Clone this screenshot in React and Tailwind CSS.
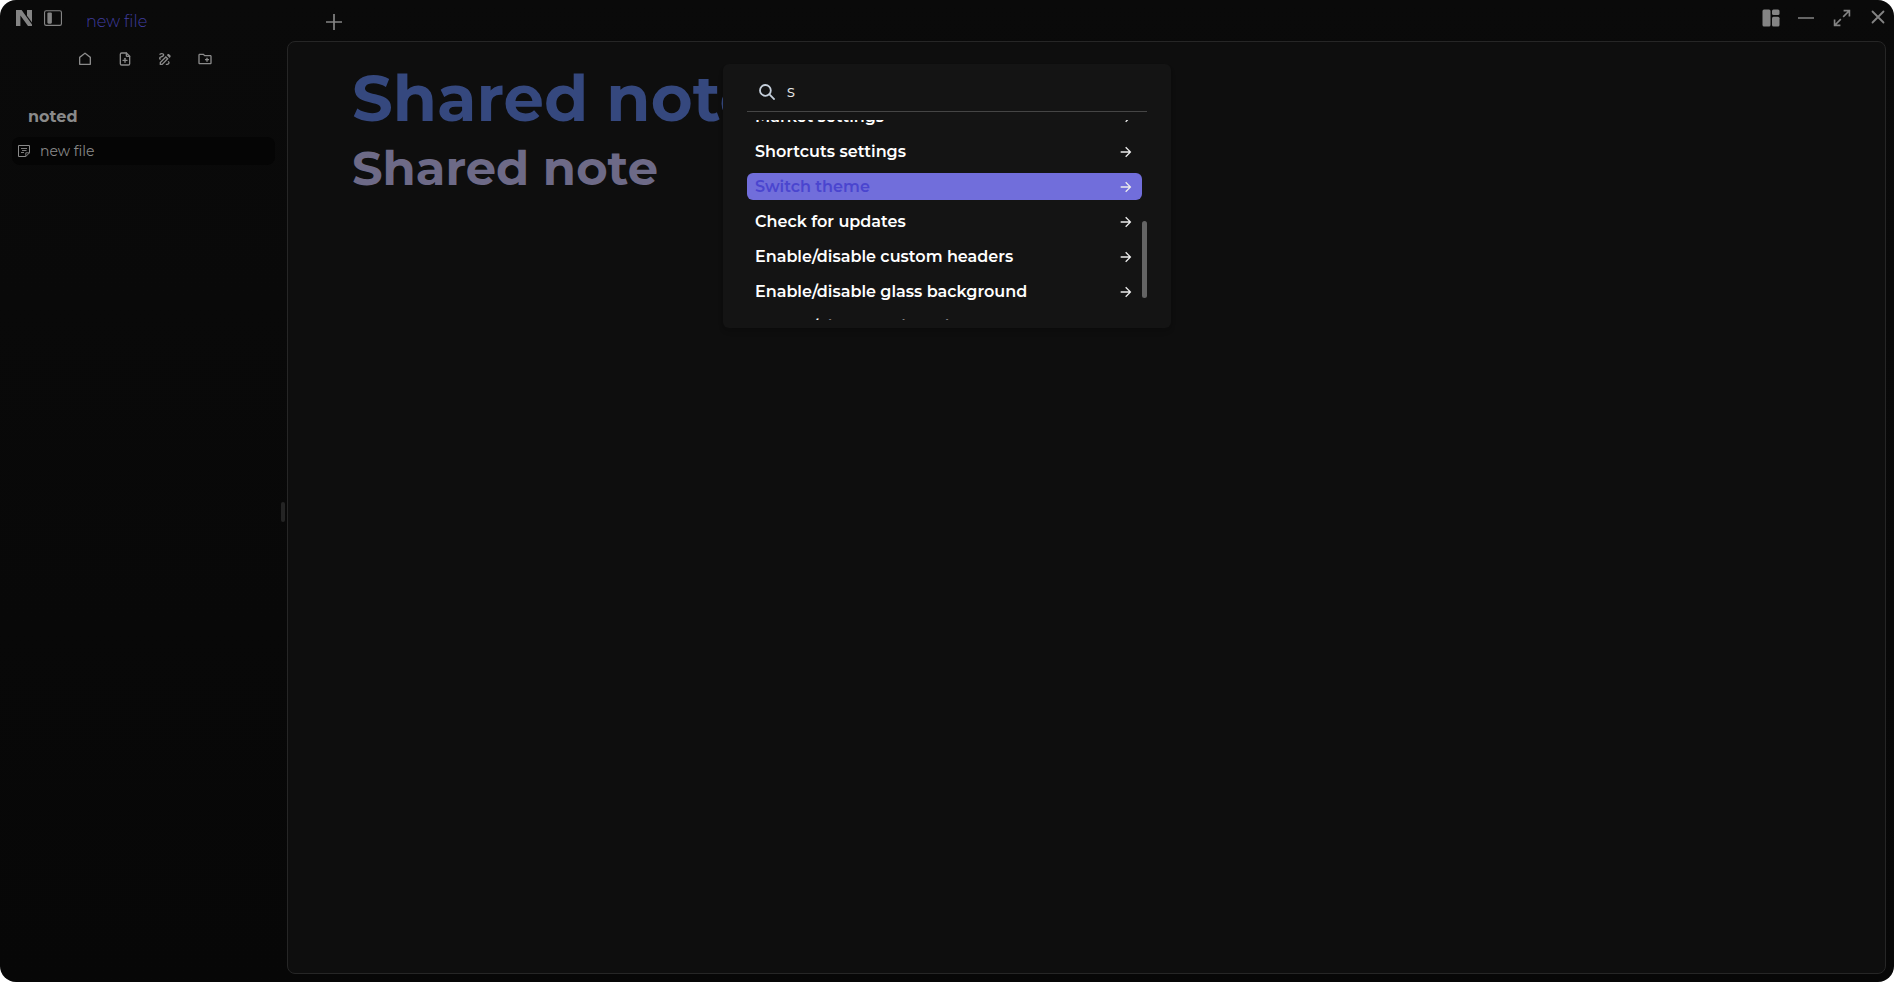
import { useState } from "react";
import { BsLayoutSidebarInset } from "react-icons/bs";
import { CgArrowsExpandRight } from "react-icons/cg";
import { MdOutlineCreateNewFolder, MdOutlineDraw } from "react-icons/md";
import { RiArrowRightLine, RiHomeLine } from "react-icons/ri";
import { TbFilePlus } from "react-icons/tb";

function Logo() {
  return (
    <svg viewBox="0 0 16 16" className="size-4" fill="currentColor" aria-hidden="true">
      <path d="M0 0h5.6L16 14.4V16h-4L4.4 5.4V16H0z" />
      <path d="M11 0h5v12.6l-5-6.9z" />
    </svg>
  );
}

function PanelsIcon() {
  return (
    <svg viewBox="0 0 18 18" className="size-[18px]" fill="currentColor" aria-hidden="true">
      <rect x="0.5" y="0.5" width="8" height="17" rx="1.5" />
      <rect x="10" y="0.5" width="7.5" height="5.5" rx="1.5" />
      <rect x="10" y="7.7" width="7.5" height="9.8" rx="1.5" />
    </svg>
  );
}

function PlusIcon() {
  return (
    <svg viewBox="0 0 16 16" className="size-4" stroke="currentColor" strokeWidth="1.7" aria-hidden="true">
      <path d="M8 0v16M0 8h16" />
    </svg>
  );
}

function MinusIcon() {
  return (
    <svg viewBox="0 0 16 16" className="size-4" stroke="currentColor" strokeWidth="1.7" aria-hidden="true">
      <path d="M0 8h16" />
    </svg>
  );
}

function CloseIcon() {
  return (
    <svg viewBox="0 0 16 16" className="size-4" stroke="currentColor" strokeWidth="1.8" strokeLinecap="round" aria-hidden="true">
      <path d="M2.5 1.5l11 11M13.5 1.5l-11 11" />
    </svg>
  );
}

function SearchIcon() {
  return (
    <svg viewBox="0 0 16 16" className="size-4 text-[#c6d0dc]" fill="none" stroke="currentColor" strokeWidth="1.8" aria-hidden="true">
      <circle cx="6.4" cy="6.4" r="5.4" />
      <path d="M10.2 10.2l5.4 5.4" />
    </svg>
  );
}

function NoteIcon() {
  return (
    <svg viewBox="0 0 12 12" className="size-3" fill="none" stroke="currentColor" aria-hidden="true">
      <path d="M.5.5h11v7.3l-3.7 3.7H.5z" />
      <path d="M11.5 7.8H7.8v3.7M3 3.5h6M4 5.5h4.5M3 7.5h3" strokeWidth="0.9" />
    </svg>
  );
}

const tools = [
  { label: "Home", Icon: RiHomeLine },
  { label: "New file", Icon: TbFilePlus },
  { label: "New drawing", Icon: MdOutlineDraw },
  { label: "New folder", Icon: MdOutlineCreateNewFolder },
];

const commands = [
  "Market settings",
  "Shortcuts settings",
  "Switch theme",
  "Check for updates",
  "Enable/disable custom headers",
  "Enable/disable glass background",
  "Enable/disable editor hints",
];

function TitleBar() {
  return (
    <header className="flex h-[41px] shrink-0 justify-between text-[#848484]">
      <div className="flex pl-4">
        <div className="flex h-9 items-center gap-3">
          <Logo />
          <button aria-label="Toggle sidebar">
            <BsLayoutSidebarInset size={18} />
          </button>
        </div>
        <button className="ml-4 mt-1 h-9 w-[240px] pl-2 text-left font-light text-[#403da0]">new file</button>
        <button aria-label="New tab" className="ml-2 mt-1 flex h-9 items-center">
          <PlusIcon />
        </button>
      </div>
      <div className="flex h-9 items-center gap-[18px] pr-2">
        <button aria-label="Layout"><PanelsIcon /></button>
        <button aria-label="Minimize"><MinusIcon /></button>
        <button aria-label="Maximize"><CgArrowsExpandRight size={20} /></button>
        <button aria-label="Close"><CloseIcon /></button>
      </div>
    </header>
  );
}

function Sidebar() {
  return (
    <aside className="flex w-[287px] shrink-0 text-[#8a8a8a]">
      <div className="flex-1 pl-2">
        <div className="flex h-9 items-center justify-center gap-6 rounded-lg">
          {tools.map(({ label, Icon }) => (
            <button key={label} aria-label={label}>
              <Icon size={16} />
            </button>
          ))}
        </div>
        <h2 className="mt-7 pl-5 text-base font-bold">noted</h2>
        <button className="ml-1 mt-2 flex h-7 w-[263px] items-center gap-[10px] rounded-lg bg-[#050505] px-[6px] text-sm">
          <NoteIcon />
          new file
        </button>
      </div>
      <div className="mr-[2px] flex items-center">
        <div className="h-5 w-1 rounded-sm bg-[#242424]" />
      </div>
    </aside>
  );
}

function CommandPalette() {
  const [query, setQuery] = useState("s");
  return (
    <div
      role="dialog"
      aria-label="Commands"
      className="absolute left-1/2 top-16 w-md -translate-x-1/2 rounded-md bg-[#141414] px-6 pb-2 pt-2 shadow-md"
    >
      <label className="flex h-10 items-center gap-3 border-b border-[#454545] pl-3">
        <SearchIcon />
        <input
          aria-label="Search commands"
          value={query}
          onChange={(e) => setQuery(e.target.value)}
          className="min-w-0 flex-1 bg-transparent text-base text-[#e5e5e5] outline-none"
        />
      </label>
      <div className="relative mt-2 h-[200px] overflow-hidden">
        <ul className="-mt-[17px] mr-[5px] flex flex-col gap-2">
          {commands.map((name) => (
            <li key={name}>
              <button
                className={
                  name === "Switch theme"
                    ? "flex h-[27px] w-full items-center justify-between rounded-md bg-[#716edb] px-2 font-semibold text-[#4a45cf]"
                    : "flex h-[27px] w-full items-center justify-between rounded-md px-2 font-semibold text-white"
                }
              >
                {name}
                <RiArrowRightLine size={16} className="text-[#ececec]" />
              </button>
            </li>
          ))}
        </ul>
        <div className="absolute right-0 top-[101px] h-[77px] w-[5px] rounded-full bg-[#646464]" />
      </div>
    </div>
  );
}

export default function App() {
  return (
    <div className="bg-white font-['Montserrat',Inter,sans-serif] text-base">
      <div className="relative flex h-screen flex-col overflow-hidden rounded-2xl bg-linear-to-b from-[#0a0a0a] to-[#070707]">
        <TitleBar />
        <div className="flex min-h-0 flex-1">
          <Sidebar />
          <main className="mb-2 mr-2 flex-1 rounded-lg border border-[#262626] bg-[#0e0e0e] px-16 pt-5 font-bold">
            <h1 className="text-[64px] leading-[72px] text-[#35487e]">Shared note</h1>
            <h2 className="mt-[6px] text-5xl leading-[56px] text-[#6d6a87]">Shared note</h2>
          </main>
        </div>
        <CommandPalette />
      </div>
    </div>
  );
}
